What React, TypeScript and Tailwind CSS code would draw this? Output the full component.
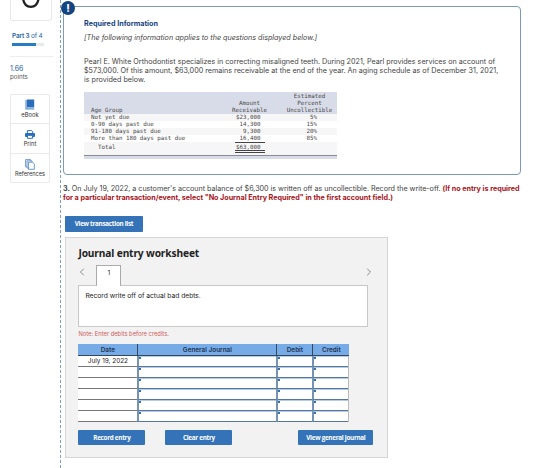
import { ChevronLeft, ChevronRight } from 'lucide-react';

const agingRows = [
  { group: 'Not yet due', amount: '$23,000', percent: '5%' },
  { group: '0-90 days past due', amount: '14,300', percent: '15%' },
  { group: '91-180 days past due', amount: '9,300', percent: '20%' },
  { group: 'More than 180 days past due', amount: '16,400', percent: '85%' },
];

const journalRows = ['July 19, 2022', '', '', '', '', ''];

function BookIcon() {
  return (
    <svg width="10" height="11" viewBox="0 0 10 11">
      <path d="M1.8 .5h7.4v8H1.8z" fill="#2a6ebb" />
      <path d="M1 1v8.8h8.2" fill="none" stroke="#5c95d0" strokeWidth="1.2" />
    </svg>
  );
}

function PrintIcon() {
  return (
    <svg width="10" height="9" viewBox="0 0 10 9">
      <path d="M2.4 3V.6h4.3l1 1V3" fill="#fff" stroke="#2a6ebb" />
      <rect x="0" y="3" width="10" height="4" rx="1" fill="#2a6ebb" />
      <path d="M2.4 5.3h5.2v3H2.4z" fill="#fff" stroke="#2a6ebb" />
    </svg>
  );
}

function CopyIcon() {
  return (
    <svg width="10" height="11" viewBox="0 0 10 11" fill="#fff" stroke="#5c90c8" strokeWidth=".9">
      <path d="M.6.6h5v7.2h-5z" />
      <path d="M2 1.9h5v7.2H2z" />
      <path d="M3.5 3.2h4l1.8 1.8v5.3H3.5z" />
    </svg>
  );
}

function Sidebar() {
  return (
    <aside className="w-[60px] shrink-0 pl-[10px]">
      <div className="flex h-[21px] w-[42px] justify-center overflow-hidden rounded-b-[3px] border border-t-0 border-[#e8e8e8]">
        <svg width="20" height="9" viewBox="0 0 20 9">
          <path d="M2 -2C2.6 4 5.8 6.8 9.8 6.8S17 4 17.6 -2" fill="none" stroke="#222" strokeWidth="2.3" />
        </svg>
      </div>
      <div className="mt-[10px] pl-[2px] text-[6.4px] leading-[10px] tracking-[-0.16px] whitespace-nowrap text-[#2b66a5]">
        <b className="font-semibold">Part 3</b> of 4
      </div>
      <div className="mt-[2px] ml-[2px] h-[3px] w-[32px] bg-[#e6ebeb]">
        <div className="h-full w-[24px] bg-[#287cc4]" />
      </div>
      <div className="mt-[10px] w-[43px] border-t border-[#eeeeee]" />
      <div className="mt-[7.5px] text-[7px] leading-[8px] text-[#23619f]">1.66</div>
      <div className="text-[6.2px] leading-[8px] text-[#555]">points</div>
      <div className="mt-[13.5px] h-[89px] w-[40px] rounded-[2px] border border-[#e9e9e9] text-center text-[5.8px] text-[#333]">
        <div className="flex h-[29px] flex-col items-center justify-between border-b border-[#e9e9e9] pt-[4px] pb-[4px] leading-[8px]">
          <BookIcon />
          <span>eBook</span>
        </div>
        <div className="flex h-[30px] flex-col items-center justify-between border-b border-[#e9e9e9] pt-[6px] pb-[5px] leading-[8px]">
          <PrintIcon />
          <span>Print</span>
        </div>
        <div className="flex h-[28px] flex-col items-center justify-between pt-[5px] pb-[4px] leading-[8px]">
          <CopyIcon />
          <span className="text-[5.6px]">References</span>
        </div>
      </div>
    </aside>
  );
}

function AgingTable() {
  return (
    <div className="mt-[8px] w-[253px] font-['DejaVu_Sans_Mono','Liberation_Mono',monospace] text-[5.8px] leading-[7px] text-[#484848]">
      <div className="flex h-[21.6px] items-end bg-[#d8dce8]">
        <div className="w-[130px] pl-[7px]">Age Group</div>
        <div className="w-[71px] text-center">Amount<br />Receivable</div>
        <div className="w-[49px] text-center">Estimated<br />Percent<br />Uncollectible</div>
      </div>
      {agingRows.map((row) => (
        <div key={row.group} className="flex h-[7.1px] items-center whitespace-nowrap odd:bg-white even:bg-[#f6f6f6]">
          <div className="w-[140px] pl-[7px]">{row.group}</div>
          <div className="w-[36.5px] text-right">{row.amount}</div>
          <div className="w-[56.5px] text-right">{row.percent}</div>
        </div>
      ))}
      <div className="flex h-[12.2px] bg-[#f6f6f6]">
        <div className="w-[151px] pt-[2px] pl-[14px]">Total</div>
        <div className="h-[10.4px] w-[30px] border-t border-b-[3px] border-double border-[#444] pt-[.4px] pr-[4.5px] text-right">$63,000</div>
      </div>
      <div className="h-[4px] border-t border-[#888c94] bg-[#d8dce8]" />
    </div>
  );
}

function BlueButton({ label, className }: { label: string; className: string }) {
  return (
    <button className={`rounded-[1px] bg-[#3573b9] text-center font-['Open_Sans',sans-serif] text-[6.3px] font-bold tracking-[-0.28px] whitespace-nowrap text-white ${className}`}>
      {label}
    </button>
  );
}

function EntryCell() {
  return (
    <div className="border-b border-l-2 border-b-[#55779f] border-l-[#7594b4] bg-white">
      <div className="h-[1px] bg-[#b5cde4]" />
      <div className="h-[2px] w-[2px] bg-[#3c6fa8]" />
    </div>
  );
}

function Worksheet() {
  return (
    <section className="mt-[5px] ml-[4px] h-[221px] w-[323px] border border-[#d5d5d5] bg-[#f2f2f2] pl-[12.4px]">
      <h2 className="mt-[8px] font-['Noto_Sans',sans-serif] text-[10.2px] leading-[14px] font-bold tracking-[-0.13px] whitespace-nowrap text-[#222]">
        Journal entry worksheet
      </h2>
      <div className="mt-[5px] flex h-[20px] w-[297px] items-start">
        <ChevronLeft className="mt-[1px] -ml-[2px] h-[12px] w-[12px] text-[#888]" />
        <div className="relative z-10 ml-[8px] h-[21px] w-[25px] border border-b-0 border-[#aaa] bg-white text-center text-[6.5px] leading-[15px] text-[#222]">1</div>
        <ChevronRight className="mt-[1px] ml-auto h-[12px] w-[12px] text-[#888]" />
      </div>
      <div className="h-[42px] w-[290px] border border-[#c8c8c8] bg-white pt-[6px] pl-[6px] text-[6.7px] leading-[9px] whitespace-nowrap text-[#222]">
        Record write off of actual bad debts.
      </div>
      <div className="mt-[2px] text-[5.8px] leading-[9px] whitespace-nowrap text-[#d15a5a]">Note: Enter debits before credits.</div>
      <div className="mt-[6px] w-[271px] text-center text-[6.4px] leading-[10px] text-[#222]">
        <div className="grid h-[12px] grid-cols-[59px_139px_36px_37px] border-b border-[#34495e] bg-[#77abe8] leading-[12px] font-semibold text-[#1d3450]">
          <div>Date</div>
          <div className="border-l border-[#34495e]">General Journal</div>
          <div className="border-l border-[#34495e]">Debit</div>
          <div className="border-l border-[#34495e]">Credit</div>
        </div>
        {journalRows.map((date, i) => (
          <div key={i} className="grid h-[11px] grid-cols-[59px_139px_36px_36px] border-r border-[#bbb]">
            <div className="border-b border-[#777] bg-white">{date}</div>
            <EntryCell />
            <EntryCell />
            <EntryCell />
          </div>
        ))}
      </div>
      <div className="mt-[8px] flex">
        <BlueButton label="Record entry" className="h-[15px] w-[67px]" />
        <BlueButton label="Clear entry" className="ml-[20px] h-[15px] w-[67px]" />
        <BlueButton label="View general journal" className="ml-[66px] h-[15px] w-[75px]" />
      </div>
    </section>
  );
}

function App() {
  return (
    <div className="flex h-[468px] w-[560px] overflow-hidden bg-white font-['Inter',sans-serif]">
      <Sidebar />
      <main className="w-[500px] border-l border-dashed border-[#7f9dbf] pt-[6px] pl-[2px]">
        <section className="relative h-[169px] w-[458px] rounded-[4px] border border-[#7c98bb] pt-[12px] pl-[20px] text-[7.2px] text-[#444]">
          <div className="absolute -top-[6px] -left-[3px] flex h-[14px] w-[14px] items-center justify-center rounded-full bg-[#154580] text-[10px] font-extrabold text-white">
            !
          </div>
          <h1 className="leading-[10px] font-bold text-[#154580]">Required Information</h1>
          <p className="mt-[4px] leading-[10px] tracking-[-0.01px] whitespace-nowrap italic">
            [The following information applies to the questions displayed below.]
          </p>
          <p className="mt-[15px] leading-[8.8px] tracking-[-0.005px] whitespace-nowrap">
            Pearl E. White Orthodontist specializes in correcting misaligned teeth. During 2021, Pearl provides services on account of
            <br />
            $573,000. Of this amount, $63,000 remains receivable at the end of the year. An aging schedule as of December 31, 2021,
            <br />
            is provided below.
          </p>
          <AgingTable />
        </section>
        <p className="mt-[9px] text-[7.2px] leading-[9px] tracking-[-0.03px] whitespace-nowrap text-[#444]">
          <b>3.</b> On July 19, 2022, a customer's account balance of $6,300 is written off as uncollectible. Record the write-off.{' '}
          <b className="text-[#a8141b]">(If no entry is required</b>
          <br />
          <b className="text-[#a8141b]">for a particular transaction/event, select "No Journal Entry Required" in the first account field.)</b>
        </p>
        <BlueButton label="View transaction list" className="mt-[14px] ml-[2px] block h-[16px] w-[78px]" />
        <div className="-ml-[2px]">
          <Worksheet />
        </div>
      </main>
    </div>
  );
}

export default App;
